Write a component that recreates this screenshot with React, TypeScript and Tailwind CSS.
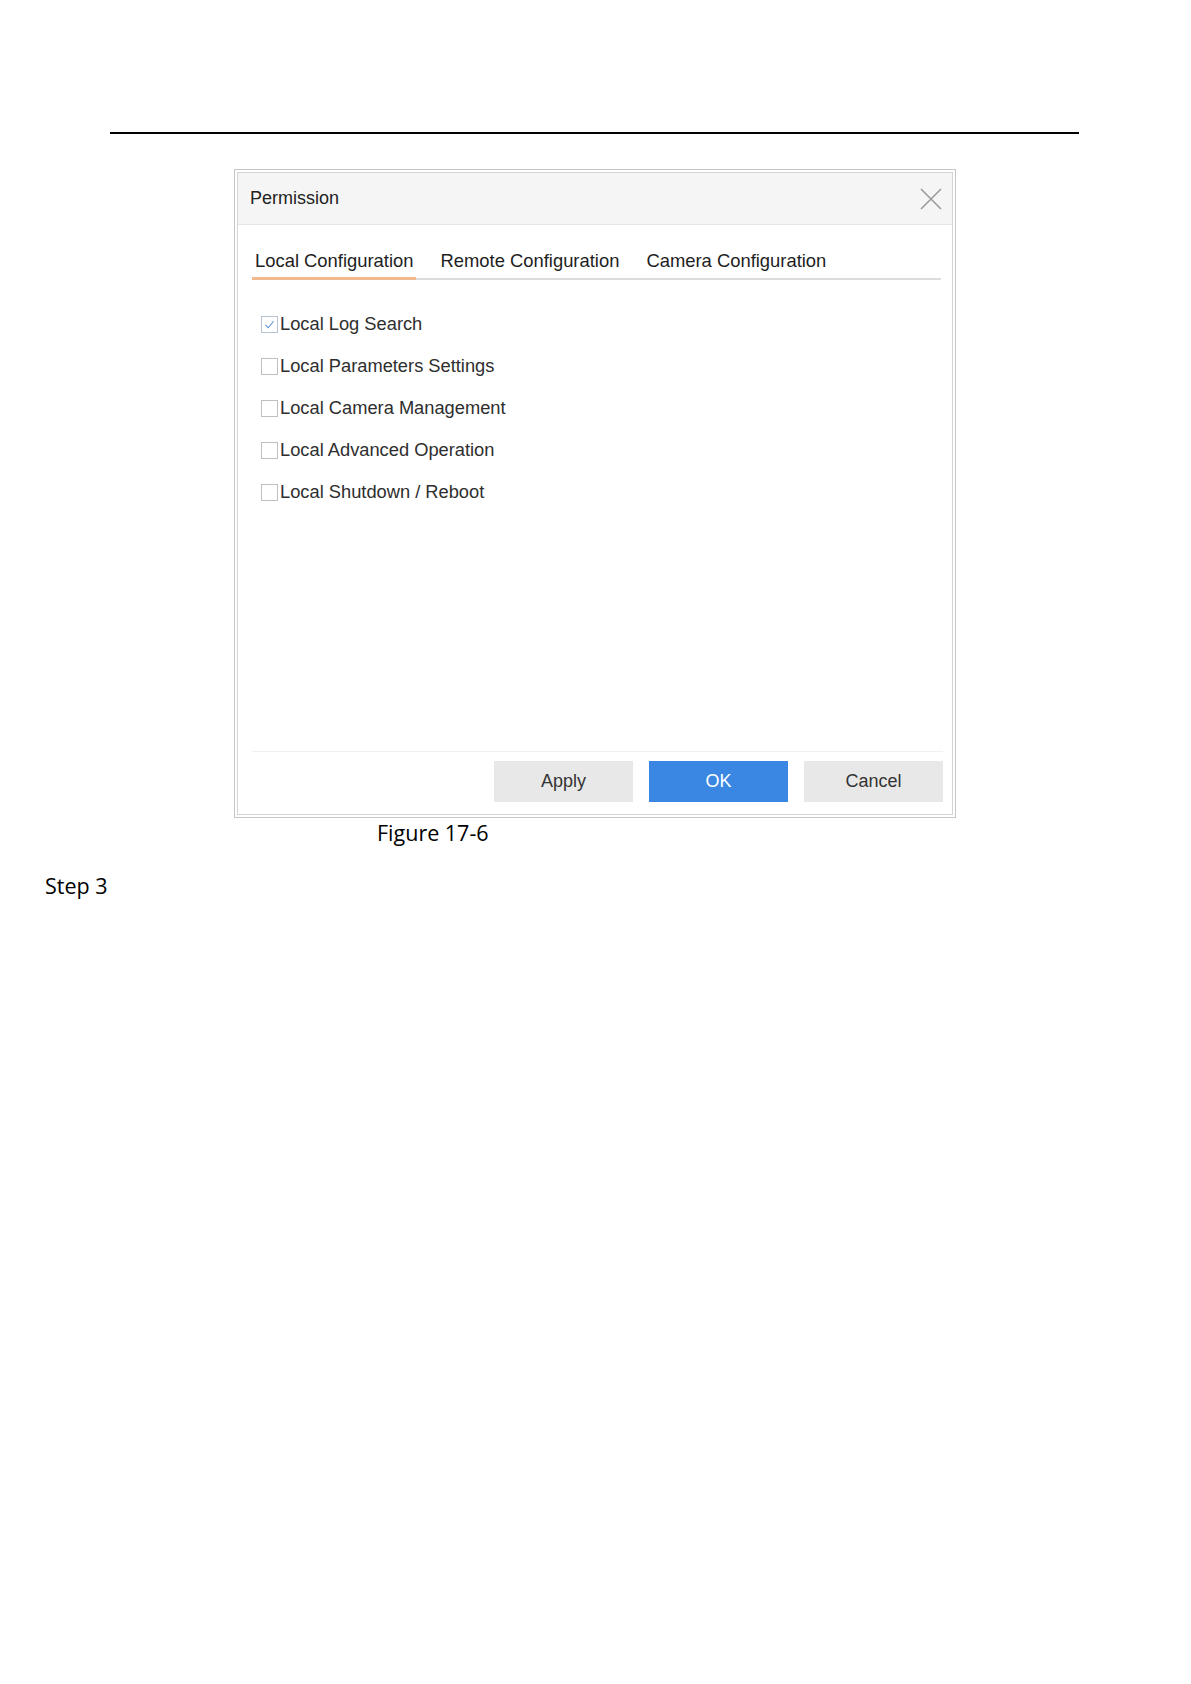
import { useState } from 'react';

const permissions = [
  'Local Log Search',
  'Local Parameters Settings',
  'Local Camera Management',
  'Local Advanced Operation',
  'Local Shutdown / Reboot',
];

const tabs = ['Local Configuration', 'Remote Configuration', 'Camera Configuration'];

function CheckBox({ checked, onClick }: { checked: boolean; onClick: () => void }) {
  return (
    <button
      onClick={onClick}
      className={`w-[17px] h-[17px] flex items-center justify-center bg-white border ${
        checked ? 'border-[#b7c3d4]' : 'border-[#bfbfbf]'
      }`}
    >
      {checked && (
        <svg viewBox="0 0 16 16" className="w-[13px] h-[13px]">
          <path d="M3 8.5 L6.5 12 L13 4" fill="none" stroke="#5a8fd8" strokeWidth="1.3" />
        </svg>
      )}
    </button>
  );
}

export default function App() {
  const [active, setActive] = useState(0);
  const [checked, setChecked] = useState<boolean[]>([true, false, false, false, false]);

  return (
    <div className="w-[1191px] h-[1684px] bg-white font-['Liberation_Sans',Arial,sans-serif]">
      {/* page rule */}
      <div className="pt-[132px] pl-[110px]">
        <div className="w-[969px] h-[2px] bg-black" />
      </div>

      {/* Permission dialog */}
      <div className="ml-[234px] mt-[35px] w-[722px] border border-[#c6c6c6] p-[2px]">
        <div className="border border-[#d4d4d4] bg-white">
          <div className="h-[52px] bg-[#f5f5f5] border-b border-[#e6e6e6] flex items-center justify-between pl-[12px] pr-[10px]">
            <span className="text-[18px] text-[#222]">Permission</span>
            <svg viewBox="0 0 22 22" className="w-[22px] h-[22px]">
              <path d="M1 1 L21 21 M21 1 L1 21" stroke="#9a9a9a" strokeWidth="1.6" fill="none" />
            </svg>
          </div>

          <div className="pl-[14px] pr-[11px]">
            <div className="flex gap-[21px] pt-[25px] border-b-2 border-[#dcdcdc]">
              {tabs.map((t, i) => (
                <button
                  key={t}
                  onClick={() => setActive(i)}
                  className={`px-[3px] pb-[6px] -mb-[2px] text-[18.4px] leading-[21px] text-[#1e1e1e] border-b-[3px] ${
                    active === i ? 'border-[#f2b98e]' : 'border-transparent'
                  }`}
                >
                  {t}
                </button>
              ))}
            </div>

            <div className="h-[471px] pt-[23px] pl-[9px]">
              {permissions.map((p, i) => (
                <div key={p} className="h-[42px] flex items-center gap-[2px]">
                  <CheckBox
                    checked={checked[i]}
                    onClick={() => setChecked(checked.map((c, j) => (j === i ? !c : c)))}
                  />
                  <span className="text-[18.3px] text-[#2e2e2e]">{p}</span>
                </div>
              ))}
            </div>

            <div className="border-t border-[#f0f0f0] pt-[9px] pb-[12px] flex justify-end gap-[16px] -mr-[2px]">
              <button className="w-[139px] h-[41px] bg-[#e8e8e8] text-[18px] text-[#333]">Apply</button>
              <button className="w-[139px] h-[41px] bg-[#3a87e3] text-[18px] text-white">OK</button>
              <button className="w-[139px] h-[41px] bg-[#e8e8e8] text-[18px] text-[#333]">Cancel</button>
            </div>
          </div>
        </div>
      </div>

      <div className="ml-[377px] mt-[2px] text-[21.5px] leading-[26px] text-black font-['Open_Sans',sans-serif]">
        Figure 17-6
      </div>

      <div className="ml-[45px] mt-[27px] text-[21.5px] leading-[26px] text-black font-['Open_Sans',sans-serif]">
        Step 3
      </div>
    </div>
  );
}
